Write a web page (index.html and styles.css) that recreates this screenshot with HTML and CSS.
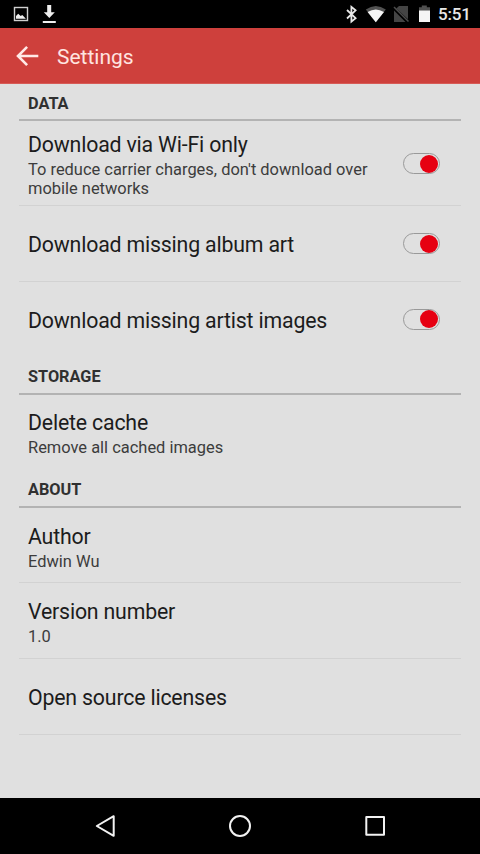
FILE: index.html
```html
<!DOCTYPE html>
<html lang="en">
<head>
<meta charset="utf-8">
<title>Settings</title>
<link rel="stylesheet" href="styles.css">
</head>
<body>
<div class="screen">
  <div class="status">
    <svg class="status-icons" width="438" height="28" viewBox="0 0 438 28">
      <rect x="14.5" y="7.5" width="13" height="13" fill="none" stroke="#cfcfcf" stroke-width="1.4"/>
      <path d="M16 18.7v-2.6l2.2-2.3 2.5 2.2 1.6-1 3.6 3.7z" fill="#eee"/>
      <path d="M47.2 5h4v7.3h3.6l-5.5 5.7-5.5-5.7h3.4zM42.8 21h13v2h-13z" fill="#eee"/>
      <path d="M347 10l8.6 8.2-4.2 3.4V6.9l4.2 3.4-8.6 8.2" fill="none" stroke="#e8e8e8" stroke-width="1.8"/>
      <path d="M375.8 22.2L365.8 9.5q10-7.2 20 0z" fill="#515151"/>
      <path d="M375.8 22.2L367.6 12q8.2-5 16.4 0z" fill="#f5f5f5"/>
      <path d="M399 6h9v13.2L396.3 8.5zM394 10.5L405.5 22H394z" fill="#444"/>
      <path d="M394 7L408.5 21.5" stroke="#4c4c4c" stroke-width="1.5"/>
      <path d="M419 7.2h2.8V5.5h5v1.7h3.2V11h-11z" fill="#505050"/>
      <path d="M419 10.5h11V22h-11z" fill="#f5f5f5"/>
    </svg>
    <span class="clock">5:51</span>
  </div>
  <header class="appbar">
    <svg class="back" width="24" height="24" viewBox="0 0 24 24"><path d="M12.1 2.8L3 12l9.1 9.2M3.3 12h20" fill="none" stroke="#ffe9e6" stroke-width="2.6"/></svg>
    <h1>Settings</h1>
  </header>
  <main>
    <h2>DATA</h2>
    <div class="row first">
      <div class="copy"><div class="title">Download via Wi-Fi only</div><div class="summary">To reduce carrier charges, don't download over<br>mobile networks</div></div>
      <div class="switch"></div>
    </div>
    <div class="row"><div class="copy"><div class="title">Download missing album art</div></div><div class="switch"></div></div>
    <div class="row last"><div class="copy"><div class="title">Download missing artist images</div></div><div class="switch"></div></div>
    <h2>STORAGE</h2>
    <div class="row last"><div class="copy"><div class="title">Delete cache</div><div class="summary">Remove all cached images</div></div></div>
    <h2>ABOUT</h2>
    <div class="row"><div class="copy"><div class="title">Author</div><div class="summary">Edwin Wu</div></div></div>
    <div class="row"><div class="copy"><div class="title">Version number</div><div class="summary">1.0</div></div></div>
    <div class="row"><div class="copy"><div class="title">Open source licenses</div></div></div>
  </main>
  <nav>
    <svg width="480" height="56" viewBox="0 0 480 56" fill="none" stroke="#f2f2f2" stroke-width="2" stroke-linejoin="round">
      <path d="M96.8 28L113.7 18.2v19.6z"/>
      <circle cx="240" cy="28" r="10"/>
      <rect x="366.3" y="19" width="17.7" height="17.7"/>
    </svg>
  </nav>
</div>
</body>
</html>
```

FILE: styles.css
```css
* { box-sizing: border-box; }
body { margin: 0; font-family: Roboto, sans-serif; }
.screen { width: 480px; height: 854px; display: flex; flex-direction: column; background: #e0e0e0; overflow: hidden; }
.status { height: 28px; background: #000; display: flex; align-items: center; flex: none; }
.status-icons { width: 438px; flex: none; }
.clock { color: #e8e8e8; font-size: 17px; font-weight: 500; letter-spacing: -0.2px; line-height: 28px; }
.appbar { height: 56px; background: #ce403c; display: flex; align-items: center; flex: none; padding-left: 15px; border-bottom: 1px solid #d75b56; }
.back { flex: none; }
h1 { margin: 2px 0 0 18px; font-size: 21px; font-weight: 400; color: #ffe4e0; line-height: 26px; }
main { flex: 1; padding: 0 19px; }
h2 { margin: 0; height: 37px; padding: 3px 9px 0; border-bottom: 2px solid #b3b3b3; font-size: 16.3px; line-height: 33px; font-weight: 700; color: #303030; }
.row { height: 75.6px; border-bottom: 1px solid #d2d2d2; padding: 4px 21px 0 9px; display: flex; align-items: center; justify-content: space-between; }
.row.first { height: 85px; }
.row.last { border-bottom-color: transparent; }
.row.last + h2 { height: 37.5px; }
.title { font-size: 21.3px; line-height: 26px; letter-spacing: -0.18px; color: #1c1c1c; white-space: nowrap; }
.summary { font-size: 16.45px; line-height: 19px; padding-top: 2px; color: #3c3c3c; white-space: nowrap; }
.switch { width: 37px; height: 21px; margin-top: -3px; border: 1.5px solid #999; border-radius: 11px; display: flex; align-items: center; justify-content: flex-end; flex: none; }
.switch::after { content: ""; width: 18px; height: 18px; border-radius: 50%; background: #e60012; margin-right: 1px; }
nav { height: 56px; background: #000; flex: none; }
nav svg { display: block; }
```
